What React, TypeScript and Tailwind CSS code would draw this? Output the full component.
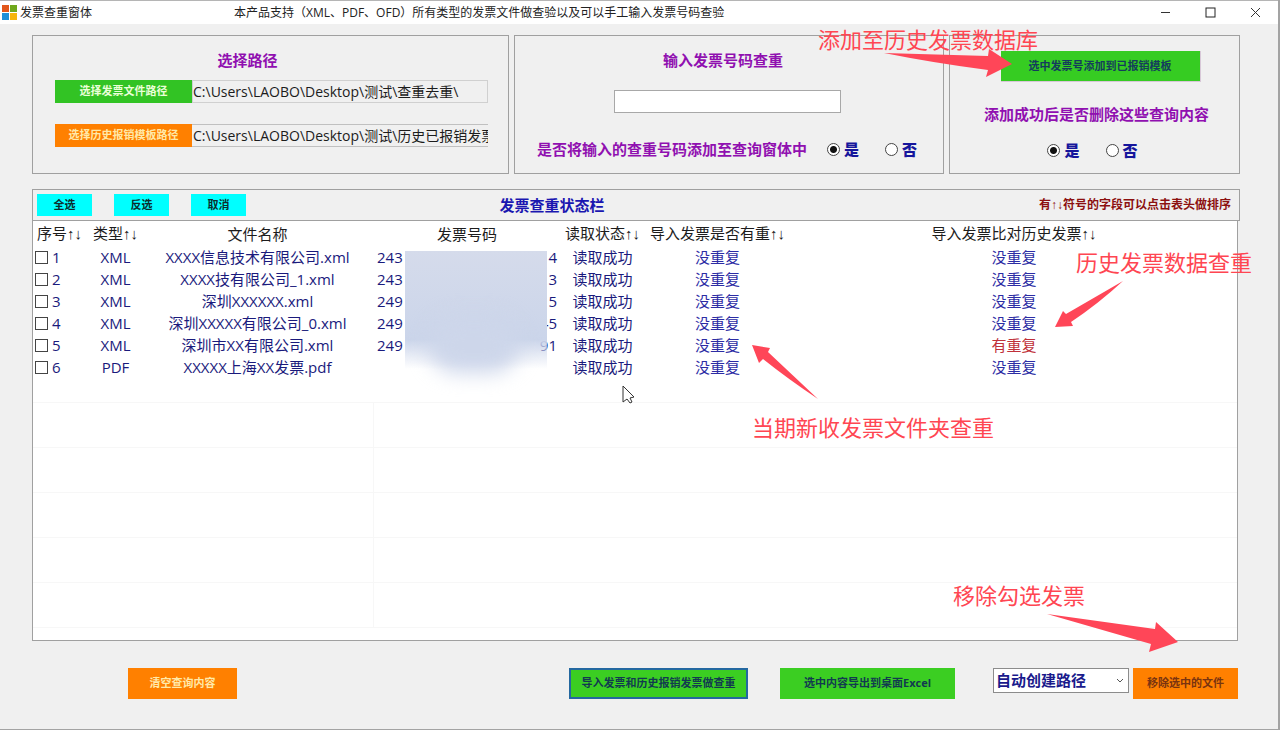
import { useState } from "react";

type Invoice = {
  id: number;
  type: string;
  name: string;
  head: string;
  tail: string;
  imported: string;
  history: string;
};

const invoices: Invoice[] = [
  { id: 1, type: "XML", name: "XXXX信息技术有限公司.xml", head: "243", tail: "4", imported: "没重复", history: "没重复" },
  { id: 2, type: "XML", name: "XXXX技有限公司_1.xml", head: "243", tail: "3", imported: "没重复", history: "没重复" },
  { id: 3, type: "XML", name: "深圳XXXXXX.xml", head: "249", tail: "5", imported: "没重复", history: "没重复" },
  { id: 4, type: "XML", name: "深圳XXXXX有限公司_0.xml", head: "249", tail: "45", imported: "没重复", history: "没重复" },
  { id: 5, type: "XML", name: "深圳市XX有限公司.xml", head: "249", tail: "91", imported: "没重复", history: "有重复" },
  { id: 6, type: "PDF", name: "XXXXX上海XX发票.pdf", head: "", tail: "", imported: "没重复", history: "没重复" },
];

const emptyRows = [1, 2, 3, 4, 5];

function SortArrows() {
  return <span className="font-['Liberation_Sans']">↑↓</span>;
}

function YesNo({ name, value, onChange }: { name: string; value: string; onChange: (v: string) => void }) {
  return (
    <div className="flex gap-[26px]">
      {["是", "否"].map((option) => (
        <label key={option} className="flex items-center gap-1 text-[15px] leading-5 font-black text-[#16169c]">
          <input
            type="radio"
            name={name}
            checked={value === option}
            onChange={() => onChange(option)}
            className="h-[13px] w-[13px] appearance-none rounded-full border border-[#444] bg-white checked:bg-[radial-gradient(circle,#111_3px,#fff_4px)]"
          />
          {option}
        </label>
      ))}
    </div>
  );
}

function TitleBar() {
  return (
    <header className="flex h-6 items-center border-t border-[#b5b5b5] bg-white text-[12px] text-[#222]">
      <div className="flex w-[234px] items-center gap-[3px] pl-0.5">
        <svg width="15" height="15" viewBox="0 0 15 15">
          <rect width="7" height="7" fill="#e2561b" />
          <rect x="8" width="7" height="7" fill="#6fa81c" />
          <rect y="8" width="7" height="7" fill="#1f8fd8" />
          <rect x="8" y="8" width="7" height="7" fill="#f5b60d" />
        </svg>
        <h1>发票查重窗体</h1>
      </div>
      <p>本产品支持（XML、PDF、OFD）所有类型的发票文件做查验以及可以手工输入发票号码查验</p>
      <div className="ml-auto flex">
        <button aria-label="最小化" className="flex h-6 w-[45px] items-center justify-center">
          <svg width="11" height="11" viewBox="0 0 11 11" stroke="#333">
            <path d="M1 5.5h9" />
          </svg>
        </button>
        <button aria-label="最大化" className="flex h-6 w-[45px] items-center justify-center">
          <svg width="11" height="11" viewBox="0 0 11 11" fill="none" stroke="#222">
            <rect x="1" y="1" width="9" height="9" />
          </svg>
        </button>
        <button aria-label="关闭" className="flex h-6 w-[45px] items-center justify-center">
          <svg width="11" height="11" viewBox="0 0 11 11" stroke="#333">
            <path d="M1 1l9 9M10 1l-9 9" />
          </svg>
        </button>
      </div>
    </header>
  );
}

function InvoiceTable() {
  return (
    <div className="relative mr-0.5 flex-1 border-x border-b border-[#a0a0a0] bg-white">
      <table className="w-full table-fixed text-center text-[15px] leading-[22px] whitespace-nowrap text-[#1a1a7c]">
        <colgroup>
          <col className="w-[56px]" />
          <col className="w-[53px]" />
          <col className="w-[231px]" />
          <col className="w-[188px]" />
          <col className="w-[83px]" />
          <col className="w-[147px]" />
          <col />
        </colgroup>
        <thead>
          <tr className="h-[25px] text-[#1c1c1c]">
            <th className="p-0 pl-1 text-left font-normal">序号<SortArrows /></th>
            <th className="p-0 font-normal">类型<SortArrows /></th>
            <th className="p-0 font-normal">文件名称</th>
            <th className="p-0 font-normal">发票号码</th>
            <th className="p-0 font-normal">读取状态<SortArrows /></th>
            <th className="p-0 font-normal">导入发票是否有重<SortArrows /></th>
            <th className="p-0 font-normal">导入发票比对历史发票<SortArrows /></th>
          </tr>
        </thead>
        <tbody>
          {invoices.map((inv) => (
            <tr key={inv.id} className="h-[22px]">
              <td className="p-0">
                <label className="flex items-center gap-1 pl-0.5">
                  <input type="checkbox" className="h-[13px] w-[13px] appearance-none border border-[#444] bg-white checked:bg-[#1a1a7c]" />
                  {inv.id}
                </label>
              </td>
              <td className="p-0">{inv.type}</td>
              <td className="p-0">{inv.name}</td>
              <td className="p-0">
                <div className="flex justify-between px-1">
                  <span>{inv.head}</span>
                  <span>{inv.tail}</span>
                </div>
              </td>
              <td className="p-0">读取成功</td>
              <td className="p-0 text-[#2c2ca4]">{inv.imported}</td>
              <td className={inv.history === "有重复" ? "p-0 text-[#c0303a]" : "p-0 text-[#2c2ca4]"}>{inv.history}</td>
            </tr>
          ))}
          <tr className="h-6 border-b border-[#f7f7f7]">
            <td colSpan={7} className="p-0"></td>
          </tr>
          {emptyRows.map((row) => (
            <tr key={row} className="h-[45px] border-b border-[#f7f7f7]">
              <td colSpan={3} className="border-r border-[#f7f7f7] p-0"></td>
              <td colSpan={4} className="p-0"></td>
            </tr>
          ))}
        </tbody>
      </table>

      {/* mask over the invoice numbers */}
      <div className="absolute top-[30px] left-[372px] h-[118px] w-[142px] bg-linear-to-b from-[#d5dbeb] via-[#cbd5ea] via-75% to-[#cdd6ea00]"></div>
      <div className="absolute top-[96px] left-[396px] h-[56px] w-[90px] rounded-full bg-[#cdd6ea] blur-[10px]"></div>
    </div>
  );
}

function Annotations() {
  return (
    <div className="pointer-events-none absolute inset-0 text-[22px] leading-[26px] whitespace-nowrap text-[#ff4652]">
      <svg className="absolute top-0 left-0" width="1280" height="730" viewBox="0 0 1280 730" fill="#ff4658">
        <path d="M884 53L988 56L989 49L1012 64L986 77L988 70Q934 63 884 53Z" />
        <path d="M1123 281L1066 314L1063 311L1055 327L1073 326L1071 322Q1098 304 1123 281Z" />
        <path d="M818 399L768 352L770 348L752 345L759 363L763 359Q788 379 818 399Z" />
        <path d="M1047 614L1155 629L1156 622L1178 642L1149 652L1151 644Z" />
        <path d="M623 386v16l4-3 3 4 2-1-2-4 4-1z" fill="#fff" stroke="#333" />
      </svg>
      <span className="absolute top-[26px] left-[818px]">添加至历史发票数据库</span>
      <span className="absolute top-[249px] left-[1076px]">历史发票数据查重</span>
      <span className="absolute top-[414px] left-[752px]">当期新收发票文件夹查重</span>
      <span className="absolute top-[582px] left-[953px]">移除勾选发票</span>
    </div>
  );
}

export default function App() {
  const [filePath, setFilePath] = useState("C:\\Users\\LAOBO\\Desktop\\测试\\查重去重\\");
  const [historyPath, setHistoryPath] = useState("C:\\Users\\LAOBO\\Desktop\\测试\\历史已报销发票");
  const [number, setNumber] = useState("");
  const [addToQuery, setAddToQuery] = useState("是");
  const [removeAfter, setRemoveAfter] = useState("是");

  return (
    <div className="relative flex min-h-screen flex-col border-r-2 border-b border-[#a3a3a3] bg-[#f0f0f0] font-['Open_Sans','Noto_Sans_CJK_SC',sans-serif]">
      <TitleBar />

      <main className="flex flex-1 flex-col pt-[11px] pr-[38px] pb-[30px] pl-8">
        <div className="grid grid-cols-[477fr_430fr_291fr] gap-[5px]">
          <section className="h-[139px] border border-[#a0a0a0] pt-3.5 pr-5 pl-[22px]">
            <h2 className="pr-12 text-center text-[15px] leading-5 font-bold text-[#9010b0]">选择路径</h2>
            <div className="mt-[10px] flex h-[23px]">
              <button className="w-[137px] bg-[#32c324] text-[11px] font-bold text-[#eaffd8]">选择发票文件路径</button>
              <input
                aria-label="发票文件路径"
                value={filePath}
                onChange={(e) => setFilePath(e.target.value)}
                className="min-w-0 flex-1 border border-[#d0d0d0] text-[14px] text-[#1c1c1c]"
              />
            </div>
            <div className="mt-[21px] flex h-[23px]">
              <button className="w-[137px] bg-[#ff8000] text-[11px] font-bold text-[#ffe9a8]">选择历史报销模板路径</button>
              <input
                aria-label="历史报销模板路径"
                value={historyPath}
                onChange={(e) => setHistoryPath(e.target.value)}
                className="min-w-0 flex-1 border-y border-[#c0c0c0] pl-px text-[14px] text-[#1c1c1c]"
              />
            </div>
          </section>

          <section className="flex h-[139px] flex-col items-center border border-[#a0a0a0] pt-3.5 pr-1">
            <label htmlFor="number" className="pr-2 text-[15px] leading-5 font-bold text-[#9010b0]">输入发票号码查重</label>
            <input
              id="number"
              value={number}
              onChange={(e) => setNumber(e.target.value)}
              className="mt-5 h-[23px] w-[227px] border border-[#a8a8a8] bg-white px-1 text-[15px]"
            />
            <div className="mt-[26px] flex items-center gap-5">
              <span className="text-[15px] leading-5 font-bold text-[#9010b0]">是否将输入的查重号码添加至查询窗体中</span>
              <YesNo name="addToQuery" value={addToQuery} onChange={setAddToQuery} />
            </div>
          </section>

          <section className="flex h-[139px] flex-col items-center border border-[#a0a0a0] pt-[15px] pl-1">
            <button className="ml-2 h-[31px] w-[200px] border-r border-b border-[#d8c8d8] bg-[#36cc22] text-[11px] font-bold text-[#143c5c]">
              选中发票号添加到已报销模板
            </button>
            <p className="mt-[22px] text-[15px] leading-5 font-bold text-[#9010b0]">添加成功后是否删除这些查询内容</p>
            <div className="mt-4 pr-2">
              <YesNo name="removeAfter" value={removeAfter} onChange={setRemoveAfter} />
            </div>
          </section>
        </div>

        <div className="mt-[15px] grid h-8 grid-cols-[1fr_auto_1fr] items-center border border-[#a0a0a0] pr-2 pl-1">
          <div className="flex gap-[22px] text-[11px] font-bold text-[#0c2c2c]">
            <button className="h-[22px] w-[55px] bg-[#00ffff]">全选</button>
            <button className="h-[22px] w-[55px] bg-[#00ffff]">反选</button>
            <button className="h-[22px] w-[55px] bg-[#00ffff]">取消</button>
          </div>
          <h2 className="mr-[164px] text-[15px] font-bold text-[#1a16b0]">发票查重状态栏</h2>
          <p className="text-right text-[12px] font-bold text-[#8c1010]">有<SortArrows />符号的字段可以点击表头做排序</p>
        </div>

        <InvoiceTable />

        <footer className="mr-0.5 flex pt-[27px] text-[11px] font-bold">
          <button className="ml-24 h-[31px] w-[109px] bg-[#ff8000] text-[#ffe9a8]">清空查询内容</button>
          <button className="ml-auto h-[31px] w-[179px] border-2 border-[#2468a0] bg-[#3bce22] text-[#123a50]">导入发票和历史报销发票做查重</button>
          <button className="ml-8 h-[31px] w-[175px] bg-[#3bce22] text-[#123a50]">选中内容导出到桌面Excel</button>
          <div className="relative ml-[38px] h-[25px] w-[136px]">
            <select aria-label="导出路径" className="h-full w-full appearance-none border border-[#8c8c8c] bg-white pl-0.5 text-[15px] font-bold text-[#1a1a8c]">
              <option>自动创建路径</option>
            </select>
            <svg className="pointer-events-none absolute top-[10px] right-[5px]" width="8" height="6" viewBox="0 0 8 6" fill="none" stroke="#555">
              <path d="M1 1l3 3 3-3" />
            </svg>
          </div>
          <button className="ml-1 h-[31px] w-[105px] bg-[#ff8000] text-[#7a3410]">移除选中的文件</button>
        </footer>
      </main>

      <Annotations />
    </div>
  );
}
